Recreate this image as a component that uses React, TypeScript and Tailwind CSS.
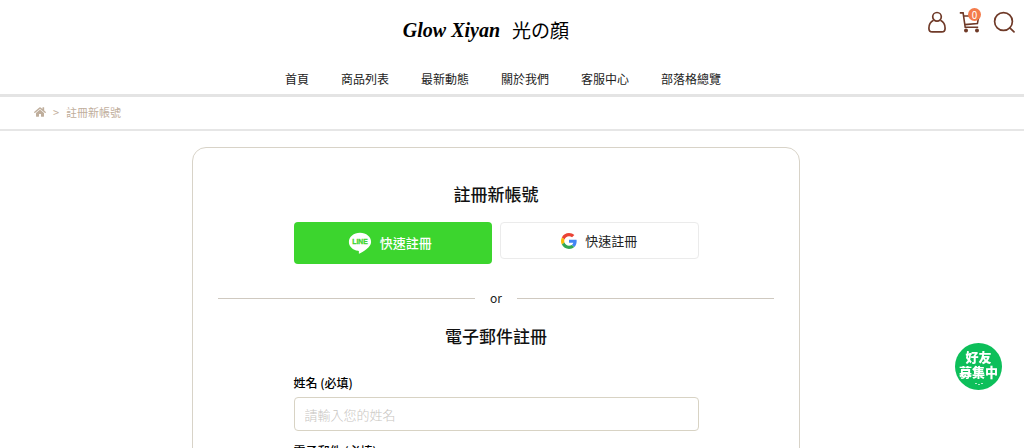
import type { ReactNode } from "react";
import { FaHome } from "react-icons/fa";

const navItems = ["首頁", "商品列表", "最新動態", "關於我們", "客服中心", "部落格總覽"];

const fields = [
  { id: "name", type: "text", label: "姓名 (必填)", placeholder: "請輸入您的姓名" },
  { id: "email", type: "email", label: "電子郵件 (必填)", placeholder: "請輸入您的電子郵件" },
];

function UserIcon() {
  return (
    <svg viewBox="0 0 20 22" className="h-[22px] w-5" fill="none" stroke="currentColor" strokeWidth="1.7">
      <circle cx="10" cy="5.8" r="4.3" />
      <path d="M6.6 9.2C3.6 10.6 1.9 13.5 1.9 17.2c0 2.6 1 3.7 3.4 3.7h9.4c2.4 0 3.4-1.1 3.4-3.7 0-3.7-1.7-6.6-4.7-8" />
    </svg>
  );
}

function CartIcon() {
  return (
    <svg viewBox="0 0 22 22" className="h-[22px] w-[22px]" fill="none" stroke="currentColor" strokeWidth="1.6">
      <path d="M.8 1.9h3.3l2.1 14.4h13M4.7 5h15.1l-1.4 7.6-12.6 1" />
      <circle cx="7" cy="19.6" r="1.2" fill="currentColor" />
      <circle cx="18" cy="19.6" r="1.2" fill="currentColor" />
    </svg>
  );
}

function SearchIcon() {
  return (
    <svg viewBox="0 0 22 22" className="h-[22px] w-[22px]" fill="none" stroke="currentColor" strokeWidth="1.7">
      <circle cx="10.5" cy="10.5" r="8.9" />
      <path d="m16.8 16.8 4.2 4" strokeLinecap="round" />
    </svg>
  );
}

function LineLogo() {
  return (
    <svg viewBox="0 0 24 22" className="h-[22px] w-6">
      <path
        d="M12 .8C5.700.8.9 4.900.9 9.900c0 4.500 3.900 8.200 9.200 8.900.9.200.900.600.8 1.400l-.1.900c0 .500.200.700.800.400 3.500-1.900 11.500-6.500 11.500-11.600C23.100 4.900 18.300.8 12 .8z"
        fill="#fff"
      />
      <text
        x="12"
        y="12.300"
        textAnchor="middle"
        fontFamily="Liberation Sans, sans-serif"
        fontSize="6.800"
        fontWeight="700"
        fill="#3cd52e"
        stroke="#3cd52e"
        strokeWidth=".3"
      >
        LINE
      </text>
    </svg>
  );
}

function GoogleLogo() {
  return (
    <svg viewBox="0 0 48 48" className="h-4 w-4">
      <path fill="#EA4335" d="M24 9.500c3.540 0 6.710 1.220 9.210 3.600l6.850-6.850C35.900 2.380 30.470 0 24 0 14.620 0 6.510 5.380 2.560 13.220l7.980 6.190C12.430 13.720 17.740 9.500 24 9.500z" />
      <path fill="#4285F4" d="M46.980 24.550c0-1.570-.15-3.090-.38-4.550H24v9.020h12.940c-.58 2.960-2.260 5.480-4.780 7.180l7.730 6c4.510-4.180 7.090-10.360 7.090-17.650z" />
      <path fill="#FBBC05" d="M10.530 28.590c-.48-1.450-.76-2.990-.76-4.590s.27-3.140.76-4.590l-7.980-6.190C.92 16.460 0 20.120 0 24s.92 7.540 2.560 10.780l7.970-6.190z" />
      <path fill="#34A853" d="M24 48c6.480 0 11.930-2.130 15.890-5.810l-7.730-6c-2.150 1.450-4.920 2.300-8.160 2.300-6.260 0-11.570-4.220-13.470-9.910l-7.980 6.190C6.510 42.620 14.620 48 24 48z" />
    </svg>
  );
}

function SectionTitle({ children }: { children: ReactNode }) {
  return <h2 className="text-center text-[17px] leading-6 font-medium text-[#111]">{children}</h2>;
}

export default function App() {
  return (
    <div className="h-screen overflow-hidden bg-white font-['Noto_Sans_CJK_TC',sans-serif] text-[#222]">
      {/* Header */}
      <header className="border-b-[3px] border-[#e4e4e4]">
        <div className="grid h-[60px] grid-cols-[1fr_auto_1fr] items-start pr-[9px]">
          <a href="#" className="col-start-2 mr-[43px] flex items-center gap-3 pt-4 leading-6 text-black">
            <span className="font-['Liberation_Serif',serif] text-xl font-bold italic">Glow Xiyan</span>
            <span className="font-['Noto_Sans_CJK_JP',sans-serif] text-[19px]">光の顔</span>
          </a>
          <div className="flex justify-end gap-3 pt-[11px] text-[#6f3a28]">
            <button type="button" aria-label="會員">
              <UserIcon />
            </button>
            <button type="button" aria-label="購物車" className="relative">
              <CartIcon />
              <span className="absolute -top-[3px] right-0 h-[13px] w-[13px] rounded-full bg-[#f47b4b] text-center text-[10px] leading-[13px] text-white">
                0
              </span>
            </button>
            <button type="button" aria-label="搜尋">
              <SearchIcon />
            </button>
          </div>
        </div>
        <nav className="flex justify-center gap-8 pt-[9px] pr-[18px] pb-[5px] text-xs leading-5">
          {navItems.map((item) => (
            <a key={item} href="#">
              {item}
            </a>
          ))}
        </nav>
      </header>

      {/* Breadcrumb */}
      <div className="flex h-[34px] items-center gap-[7px] border-b-2 border-[#e6e6e6] pb-0.5 pl-[34px] text-[11px] text-[#bfae9c]">
        <a href="#" aria-label="首頁">
          <FaHome size={12} />
        </a>
        <span>&gt;</span>
        <span>註冊新帳號</span>
      </div>

      <main className="pt-4 pr-8">
        <section className="mx-auto max-w-[608px] rounded-[14px] border border-[#d8d3c8] px-[25px] pt-[34px] pb-10">
          <SectionTitle>註冊新帳號</SectionTitle>
          <div className="mx-auto mt-4 grid max-w-[405px] grid-cols-2 items-start gap-2">
            <button
              type="button"
              className="flex h-[42px] items-center justify-center gap-2 rounded bg-[#3cd52e] pr-1.5 text-[13px] font-medium text-white"
            >
              <LineLogo />
              快速註冊
            </button>
            <button
              type="button"
              className="flex h-[37px] items-center justify-center gap-2 rounded border border-[#ebebeb] text-[13px]"
            >
              <GoogleLogo />
              快速註冊
            </button>
          </div>

          <div className="mt-6 mb-4 flex items-center gap-[15px] text-xs leading-5">
            <span className="h-px flex-1 bg-[#cfc9c0]" />
            or
            <span className="h-px flex-1 bg-[#cfc9c0]" />
          </div>

          <SectionTitle>電子郵件註冊</SectionTitle>
          <form className="mx-auto mt-[25px] max-w-[405px]">
            {fields.map((field) => (
              <div key={field.id} className="mb-2.5">
                <label htmlFor={field.id} className="block pb-1 text-xs leading-5 font-medium text-black">
                  {field.label}
                </label>
                <input
                  id={field.id}
                  type={field.type}
                  placeholder={field.placeholder}
                  className="block h-[34px] w-full rounded border border-[#d8d3c4] px-2.5 text-[13px] font-light placeholder:text-[#c8c5bf]"
                />
              </div>
            ))}
          </form>
        </section>
      </main>

      <button
        type="button"
        className="fixed right-[22px] bottom-[58px] flex h-[47px] w-[47px] flex-col items-center justify-center rounded-full bg-[#0dbf5a] text-[13px] leading-[15px] font-black text-white"
      >
        <span>好友</span>
        <span>募集中</span>
        <svg viewBox="0 0 8 2" className="mt-1 h-0.5 w-2" fill="#fff" opacity=".7">
          <path d="M0 0h2v1H0zM3 1h2v1H3zM6 0h2v1H6z" />
        </svg>
      </button>
    </div>
  );
}
